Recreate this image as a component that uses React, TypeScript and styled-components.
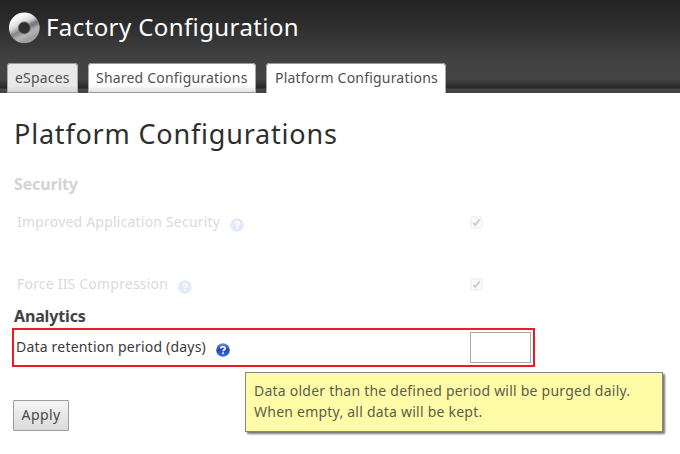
import React from 'react';
import styled, { createGlobalStyle } from 'styled-components';

const GlobalStyle = createGlobalStyle`
  * { box-sizing: border-box; }
  body {
    margin: 0;
    background: #fff;
    color: #333;
    font: 14px/20px "Noto Sans", "Open Sans", sans-serif;
    letter-spacing: 0.2px;
  }
`;

const Page = styled.div`
  display: flex;
  flex-direction: column;
  width: 680px;
  height: 454px;
  overflow: hidden;
`;

const Header = styled.header`
  display: flex;
  flex-direction: column;
  justify-content: space-between;
  height: 93px;
  padding-top: 11px;
  background: linear-gradient(#242424 0, #272727 12px, #424242 62px, #444 79px, #262626 88px, #484848 89px, #424242 93px);
`;

const Brand = styled.div`
  display: flex;
  align-items: center;
  gap: 5px;
  height: 32px;
  padding-left: 8px;
`;

const AppName = styled.span`
  color: #fff;
  font-size: 24px;
  line-height: 32px;
  letter-spacing: 0.4px;
`;

const Tabs = styled.nav`
  display: flex;
  gap: 10px;
  padding-left: 7px;
`;

const Tab = styled.a<{ $tone: 'muted' | 'plain' | 'active'; $width: number }>`
  width: ${p => p.$width}px;
  height: 30px;
  padding: 5px 0 0 ${p => (p.$tone === 'active' ? 9 : 8)}px;
  border-radius: 4px 4px 0 0;
  color: #505050;
  white-space: nowrap;
  box-shadow: inset 0 1px #999, inset 1px 0 #aaa, inset -1px 0 #aaa;
  background: ${p =>
    p.$tone === 'active'
      ? '#fff'
      : p.$tone === 'muted'
      ? 'linear-gradient(#e9e9e9 22px, #d6d6d6 29px, #999 29px)'
      : 'linear-gradient(#fff 22px, #e2e2e2 29px, #999 29px)'};
`;

const Content = styled.main`
  display: flex;
  flex-direction: column;
  align-items: flex-start;
  padding: 23px 0 0 14px;
`;

const Title = styled.h1`
  margin: 0 0 22px;
  color: #2e2e2e;
  font-size: 27px;
  font-weight: 400;
  line-height: 36px;
  letter-spacing: 0.8px;
`;

const SectionTitle = styled.h2<{ $faded?: boolean }>`
  margin: 0;
  color: ${p => (p.$faded ? '#d3d3d3' : '#424242')};
  font-size: 16px;
  font-weight: 700;
  line-height: 20px;
  letter-spacing: -0.15px;
`;

const Setting = styled.div<{ $height: number; $offset?: number }>`
  display: grid;
  grid-template-columns: 453px auto;
  align-items: center;
  height: ${p => p.$height}px;
  padding: ${p => p.$offset ?? 0}px 0 0 3px;
  color: #dadada;
`;

const RetentionSetting = styled(Setting)`
  grid-template-columns: 454px auto;
  width: 523px;
  margin: 2px 0 0 -2px;
  padding-left: 2px;
  border: 2px solid #ed1c24;
  color: #3a3a3a;
`;

const Label = styled.span`
  display: flex;
  align-items: center;
  gap: 10px;
  margin-bottom: 2px;
  white-space: nowrap;

  svg { margin-top: 6px; }
`;

const DaysInput = styled.input`
  width: 61px;
  height: 31px;
  border: 1px solid #aaa;
  background: #fff;
`;

const Actions = styled.div`
  display: flex;
  align-items: flex-start;
  width: 100%;
  margin-left: -1px;
  padding-top: 5px;
`;

const ApplyButton = styled.button`
  width: 56px;
  height: 31px;
  margin-top: 28px;
  padding: 0 0 1px;
  border: 1px solid #9c9c9c;
  border-radius: 1px;
  background: linear-gradient(#f5f5f5, #dadada);
  color: #484848;
  font: inherit;
  letter-spacing: 0.4px;
`;

const Hint = styled.p`
  width: 418px;
  height: 60px;
  margin: 0 0 0 176px;
  padding: 7px 0 0 8px;
  border: 1px solid #868686;
  background: #fffca8;
  box-shadow: 2px 2px 2px #777;
  color: #5c5c4c;
  line-height: 21px;
  letter-spacing: 0.23px;
  white-space: nowrap;
`;

const LogoSvg = styled.svg`
  flex: none;
`;

function Logo() {
  return (
    <LogoSvg width="33" height="32" viewBox="0 0 33 32">
      <defs>
        <linearGradient id="ring" x1="0.2" y1="0" x2="0.75" y2="1">
          <stop offset="0" stopColor="#fafafa" />
          <stop offset="0.3" stopColor="#dcdcdc" />
          <stop offset="0.55" stopColor="#858585" />
          <stop offset="0.8" stopColor="#b4b4b4" />
          <stop offset="1" stopColor="#a0a0a0" />
        </linearGradient>
      </defs>
      <circle cx="16.3" cy="16.8" r="10.6" fill="none" stroke="url(#ring)" strokeWidth="9.5" />
      <path d="M23 14 30 11" stroke="#555" strokeWidth="5" opacity=".3" />
      <circle cx="16.3" cy="16.8" r="6" fill="none" stroke="#666" strokeWidth="0.8" />
    </LogoSvg>
  );
}

function HelpIcon({ faded }: { faded?: boolean }) {
  return (
    <svg width="14" height="14" viewBox="0 0 14 14">
      <defs>
        <linearGradient id="help" x1="0" y1="0" x2="0" y2="1">
          <stop offset="0" stopColor="#6d8bd9" />
          <stop offset="0.5" stopColor="#2448b4" />
          <stop offset="1" stopColor="#3f74ef" />
        </linearGradient>
      </defs>
      <circle cx="7" cy="7" r="6.8" fill={faded ? '#e3e9f8' : 'url(#help)'} />
      <path d="M4.8 5.4C4.9 3.2 9.2 3.2 9.2 5.4 9.2 6.8 7.1 6.7 7.1 8.3" fill="none" stroke="#fff" strokeWidth="1.7" />
      <rect x="6.2" y="9.3" width="1.8" height="1.7" fill="#fff" />
    </svg>
  );
}

function CheckBox() {
  return (
    <svg width="13" height="13" viewBox="0 0 13 13">
      <rect x="1" y="1" width="11" height="11" rx="1.5" fill="#fbfbfb" stroke="#e9e9e9" />
      <path d="M3.2 6.8 5.3 9 9.8 3.3" fill="none" stroke="#d2d2d2" strokeWidth="2.2" />
    </svg>
  );
}

export default function App() {
  return (
    <Page>
      <GlobalStyle />
      <Header>
        <Brand>
          <Logo />
          <AppName>Factory Configuration</AppName>
        </Brand>
        <Tabs>
          <Tab $tone="muted" $width={71}>eSpaces</Tab>
          <Tab $tone="plain" $width={168}>Shared Configurations</Tab>
          <Tab $tone="active" $width={180}>Platform Configurations</Tab>
        </Tabs>
      </Header>
      <Content>
        <Title>Platform Configurations</Title>
        <SectionTitle $faded>Security</SectionTitle>
        <Setting $height={57}>
          <Label>Improved Application Security <HelpIcon faded /></Label>
          <CheckBox />
        </Setting>
        <Setting $height={55} $offset={12}>
          <Label>Force IIS Compression <HelpIcon faded /></Label>
          <CheckBox />
        </Setting>
        <SectionTitle>Analytics</SectionTitle>
        <RetentionSetting $height={39}>
          <Label>Data retention period (days) <HelpIcon /></Label>
          <DaysInput aria-label="Data retention period (days)" />
        </RetentionSetting>
        <Actions>
          <ApplyButton>Apply</ApplyButton>
          <Hint>
            Data older than the defined period will be purged daily.
            <br />
            When empty, all data will be kept.
          </Hint>
        </Actions>
      </Content>
    </Page>
  );
}
